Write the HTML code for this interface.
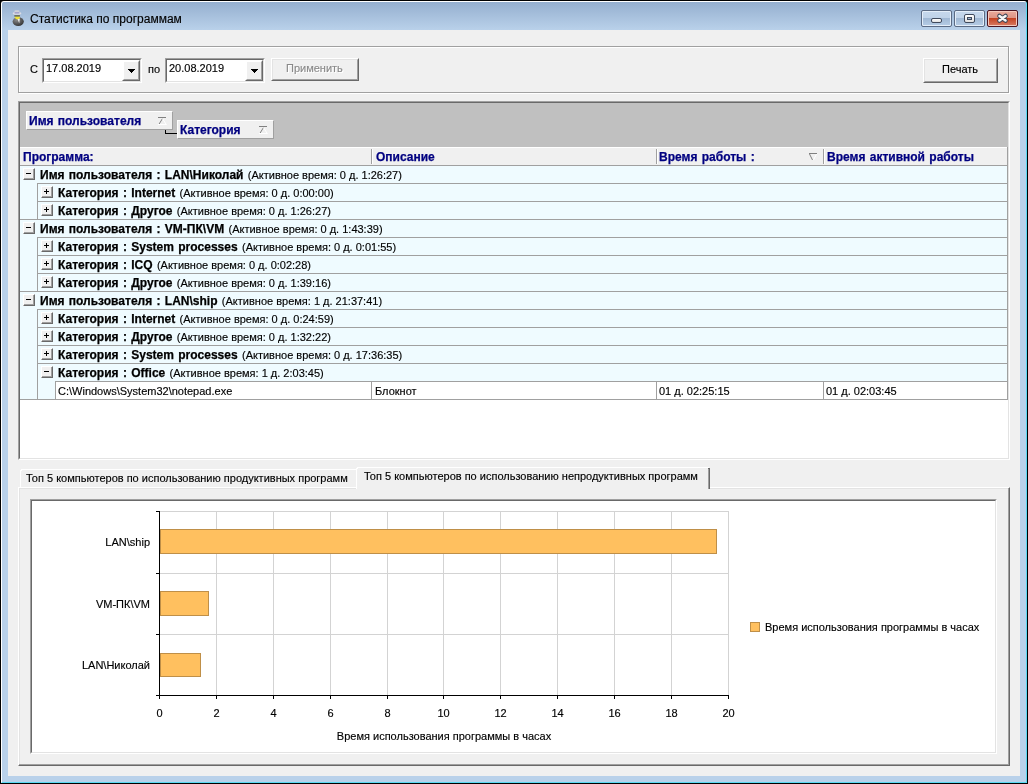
<!DOCTYPE html>
<html><head><meta charset="utf-8">
<style>
*{margin:0;padding:0;box-sizing:border-box}
html,body{width:1028px;height:784px;overflow:hidden;background:#000}
body{position:relative;font-family:"Liberation Sans",sans-serif;font-size:11px;color:#000;-webkit-text-stroke:0.15px}
.a{position:absolute}
.t{position:absolute;white-space:pre;line-height:13px;will-change:transform}
.bd{font-weight:bold;font-size:12px;-webkit-text-stroke:0.25px;word-spacing:1px}
.nm{font-weight:normal;font-size:11px;-webkit-text-stroke:0.15px;word-spacing:0}
.nv{color:#000080}
.sunk{position:absolute;border:1px solid;border-color:#a0a0a0 #fff #fff #a0a0a0}
.sunk>.in{position:absolute;left:0;top:0;right:0;bottom:0;border:1px solid;border-color:#696969 #e3e3e3 #e3e3e3 #696969}
.rais{position:absolute;border:1px solid;border-color:#fff #696969 #696969 #fff;background:#f0f0f0}
.rais>.in{position:absolute;left:0;top:0;right:0;bottom:0;border:1px solid;border-color:#e3e3e3 #a0a0a0 #a0a0a0 #e3e3e3}
.btn{position:absolute;width:12px;height:12px;background:#f0f0f0;border:1px solid;border-color:#fff #696969 #696969 #fff;box-shadow:inset -1px -1px 0 #a0a0a0}
.btn>.h{position:absolute;left:2px;top:4px;width:5px;height:1px;background:#000}
.btn>.v{position:absolute;left:4px;top:2px;width:1px;height:5px;background:#000}
.arr{position:absolute;width:0;height:0;border-left:4px solid transparent;border-right:4px solid transparent;border-top:4px solid #000}
.hdr{position:absolute;background:#f0f0f0;border-bottom:1px solid #a0a0a0}
.ghd{position:absolute;background:#f0f0f0;border:1px solid;border-color:#fff #a0a0a0 #a0a0a0 #fff}
</style></head><body>

<!-- window frame -->
<div class="a" style="left:1px;top:1px;width:1026px;height:782px;background:#b9d1ea;border-top:1px solid #fff;border-left:1px solid #fff;border-right:1px solid #5ad8f2;border-bottom:1px solid #5ad8f2;border-radius:3px 3px 0 0"></div>
<div class="a" style="left:2px;top:2px;width:1024px;height:28px;background:linear-gradient(#95afcf,#b9d1ea);border-radius:2px 2px 0 0"></div>
<div class="a" style="left:8px;top:30px;width:1012px;height:746px;background:#f0f0f0"></div>


<!-- caption buttons -->
<div class="a" style="left:921px;top:10px;width:31px;height:17px;border:1px solid #5b6b84;border-radius:2px;background:linear-gradient(#c6d8ec 0,#c0d3e9 7px,#9fb7d3 7px,#b6cde6 100%);box-shadow:inset 0 0 0 1px #e4eef9"></div>
<div class="a" style="left:954px;top:10px;width:31px;height:17px;border:1px solid #5b6b84;border-radius:2px;background:linear-gradient(#c6d8ec 0,#c0d3e9 7px,#9fb7d3 7px,#b6cde6 100%);box-shadow:inset 0 0 0 1px #e4eef9"></div>
<div class="a" style="left:987px;top:10px;width:31px;height:17px;border:1px solid #4b1420;border-radius:2px;background:linear-gradient(#eaaa9c 0,#de9484 7px,#c3401f 7px,#d77c64 100%);box-shadow:inset 0 0 0 1px #f4c9bd"></div>
<div class="a" style="left:931px;top:18px;width:11px;height:5px;border:1px solid #404a5c;border-radius:2px;background:linear-gradient(#fff,#e0e0e0)"></div>
<div class="a" style="left:964px;top:14px;width:11px;height:9px;border:1px solid #404a5c;border-radius:2px;background:linear-gradient(#fff,#e0e0e0)"></div>
<div class="a" style="left:967px;top:17px;width:5px;height:3px;border:1px solid #404a5c;background:#9fb7d3"></div>
<svg class="a" style="left:995px;top:12px" width="15" height="13" viewBox="0 0 15 13">
<path d="M4.5 4 L10.5 8.5 M10.5 4 L4.5 8.5" stroke="#3d4556" stroke-width="4.6" stroke-linecap="round" fill="none"/>
<path d="M4.5 4 L10.5 8.5 M10.5 4 L4.5 8.5" stroke="#f6f6f6" stroke-width="2.6" stroke-linecap="round" fill="none"/>
</svg>
<!-- icon -->
<svg class="a" style="left:8px;top:6px" width="20" height="22" viewBox="0 0 20 22">
<defs><radialGradient id="bg1" cx="0.35" cy="0.3" r="0.8"><stop offset="0" stop-color="#8a8a8a"/><stop offset="1" stop-color="#2e2e2e"/></radialGradient></defs>
<ellipse cx="10.2" cy="15.6" rx="5.6" ry="4.3" fill="url(#bg1)"/>
<path d="M9.3 12.4 L11.9 12.4 L11.2 17.2 Z" fill="#f0f0f0"/>
<ellipse cx="9.4" cy="11.3" rx="2.5" ry="2.1" fill="#eee23a"/>
<rect x="6.3" y="9" width="5.6" height="1.7" fill="#6b7264"/>
<ellipse cx="9" cy="7.4" rx="4.3" ry="1.3" fill="#dcdce4"/>
<rect x="6.4" y="4.2" width="5" height="3" rx="1.2" fill="#cfd0d8"/>
<rect x="6.6" y="6.4" width="4.8" height="1" fill="#8888c4"/>
</svg>

<!-- title -->
<div class="t" style="left:30px;top:12px;font-size:12px;line-height:15px">Статистика по программам</div>

<!-- top etched box -->
<div class="a" style="left:19px;top:47px;width:991px;height:47px;border:1px solid #fff"></div>
<div class="a" style="left:18px;top:46px;width:991px;height:47px;border:1px solid #a0a0a0"></div>

<div class="t" style="left:30px;top:63px">С</div>
<div class="sunk" style="left:42px;top:58px;width:100px;height:25px"><div class="in" style="background:#fff"></div></div>
<div class="t" style="left:46px;top:62px">17.08.2019</div>
<div class="rais" style="left:122px;top:60px;width:18px;height:21px"><div class="in" style="border-color:#fff #a0a0a0 #a0a0a0 #fff"></div></div>
<svg class="a" style="left:128px;top:69px" width="7" height="4" shape-rendering="crispEdges"><rect x="0" y="0" width="7" height="1"/><rect x="1" y="1" width="5" height="1"/><rect x="2" y="2" width="3" height="1"/><rect x="3" y="3" width="1" height="1"/></svg>

<div class="t" style="left:148px;top:63px">по</div>
<div class="sunk" style="left:165px;top:58px;width:100px;height:25px"><div class="in" style="background:#fff"></div></div>
<div class="t" style="left:169px;top:62px">20.08.2019</div>
<div class="rais" style="left:245px;top:60px;width:18px;height:21px"><div class="in" style="border-color:#fff #a0a0a0 #a0a0a0 #fff"></div></div>
<svg class="a" style="left:251px;top:69px" width="7" height="4" shape-rendering="crispEdges"><rect x="0" y="0" width="7" height="1"/><rect x="1" y="1" width="5" height="1"/><rect x="2" y="2" width="3" height="1"/><rect x="3" y="3" width="1" height="1"/></svg>

<div class="rais" style="left:271px;top:58px;width:88px;height:23px"><div class="in"></div></div>
<div class="t" style="left:287px;top:63px;color:#fff">Применить</div>
<div class="t" style="left:286px;top:62px;color:#8a8a8a">Применить</div>

<div class="rais" style="left:923px;top:58px;width:75px;height:25px"><div class="in"></div></div>
<div class="t" style="left:942px;top:63px">Печать</div>

<!-- grid -->
<div class="sunk" style="left:18px;top:101px;width:992px;height:359px"><div class="in" style="background:#fff"></div></div>
<div class="a" style="left:20px;top:103px;width:988px;height:44px;background:#c0c0c0"></div>
<div class="ghd" style="left:26px;top:111px;width:147px;height:19px"></div>
<div class="t bd nv" style="left:29px;top:115px">Имя пользователя</div>
<div class="a" style="left:165px;top:130px;width:1px;height:4px;background:#000"></div>
<div class="a" style="left:165px;top:133px;width:12px;height:1px;background:#000"></div>
<div class="ghd" style="left:177px;top:120px;width:97px;height:19px"></div>
<div class="t bd nv" style="left:180px;top:124px">Категория</div>




<!-- column headers -->
<div class="a" style="left:20px;top:147px;width:988px;height:19px;background:#f0f0f0;border-top:1px solid #fff;border-bottom:1px solid #a0a0a0"></div>
<div class="a" style="left:371px;top:149px;width:1px;height:15px;background:#a0a0a0"></div>
<div class="a" style="left:372px;top:149px;width:1px;height:15px;background:#fff"></div>
<div class="a" style="left:656px;top:149px;width:1px;height:15px;background:#a0a0a0"></div>
<div class="a" style="left:657px;top:149px;width:1px;height:15px;background:#fff"></div>
<div class="a" style="left:823px;top:149px;width:1px;height:15px;background:#a0a0a0"></div>
<div class="a" style="left:824px;top:149px;width:1px;height:15px;background:#fff"></div>
<div class="a" style="left:1007px;top:147px;width:1px;height:19px;background:#a0a0a0"></div>
<div class="t bd nv" style="left:23px;top:151px">Программа:</div>
<div class="t bd nv" style="left:376px;top:151px">Описание</div>
<div class="t bd nv" style="left:659px;top:151px">Время работы :</div>
<div class="t bd nv" style="left:827px;top:151px">Время активной работы</div>
<svg class="a" style="left:0;top:0" width="1028" height="200">
<path d="M158 117.5 H166" stroke="#808080" stroke-width="1"/>
<path d="M158.5 125 L162.5 118.5" stroke="#808080" stroke-width="1"/>
<path d="M162.5 118.5 L166.5 125 M158 124.5 H166" stroke="#fff" stroke-width="1"/>
<path d="M259 126.5 H267" stroke="#808080" stroke-width="1"/>
<path d="M259.5 134 L263.5 127.5" stroke="#808080" stroke-width="1"/>
<path d="M263.5 127.5 L267.5 134 M259 133.5 H267" stroke="#fff" stroke-width="1"/>
<path d="M809 153.5 H817" stroke="#808080" stroke-width="1"/>
<path d="M809.5 154 L812.5 160" stroke="#808080" stroke-width="1"/>
<path d="M816.5 154 L813.5 160" stroke="#fff" stroke-width="1"/>
</svg>

<div class="a" style="left:20px;top:166px;width:988px;height:234px;background:#effbff"></div>
<div class="a" style="left:37px;top:183px;width:971px;height:1px;background:#a0a0a0"></div>
<div class="btn" style="left:23px;top:168px"><i class="h"></i></div>
<div class="t bd" style="left:40px;top:166px;line-height:18px">Имя пользователя : LAN\Николай <span class="nm">(Активное время: 0 д. 1:26:27)</span></div>
<div class="a" style="left:37px;top:201px;width:971px;height:1px;background:#a0a0a0"></div>
<div class="a" style="left:37px;top:184px;width:1px;height:18px;background:#a0a0a0"></div>
<div class="btn" style="left:41px;top:186px"><i class="h"></i><i class="v"></i></div>
<div class="t bd" style="left:58px;top:184px;line-height:18px">Категория : Internet <span class="nm">(Активное время: 0 д. 0:00:00)</span></div>
<div class="a" style="left:20px;top:219px;width:988px;height:1px;background:#a0a0a0"></div>
<div class="a" style="left:37px;top:202px;width:1px;height:18px;background:#a0a0a0"></div>
<div class="btn" style="left:41px;top:204px"><i class="h"></i><i class="v"></i></div>
<div class="t bd" style="left:58px;top:202px;line-height:18px">Категория : Другое <span class="nm">(Активное время: 0 д. 1:26:27)</span></div>
<div class="a" style="left:37px;top:237px;width:971px;height:1px;background:#a0a0a0"></div>
<div class="btn" style="left:23px;top:222px"><i class="h"></i></div>
<div class="t bd" style="left:40px;top:220px;line-height:18px">Имя пользователя : VM-ПК\VM <span class="nm">(Активное время: 0 д. 1:43:39)</span></div>
<div class="a" style="left:37px;top:255px;width:971px;height:1px;background:#a0a0a0"></div>
<div class="a" style="left:37px;top:238px;width:1px;height:18px;background:#a0a0a0"></div>
<div class="btn" style="left:41px;top:240px"><i class="h"></i><i class="v"></i></div>
<div class="t bd" style="left:58px;top:238px;line-height:18px">Категория : System processes <span class="nm">(Активное время: 0 д. 0:01:55)</span></div>
<div class="a" style="left:37px;top:273px;width:971px;height:1px;background:#a0a0a0"></div>
<div class="a" style="left:37px;top:256px;width:1px;height:18px;background:#a0a0a0"></div>
<div class="btn" style="left:41px;top:258px"><i class="h"></i><i class="v"></i></div>
<div class="t bd" style="left:58px;top:256px;line-height:18px">Категория : ICQ <span class="nm">(Активное время: 0 д. 0:02:28)</span></div>
<div class="a" style="left:20px;top:291px;width:988px;height:1px;background:#a0a0a0"></div>
<div class="a" style="left:37px;top:274px;width:1px;height:18px;background:#a0a0a0"></div>
<div class="btn" style="left:41px;top:276px"><i class="h"></i><i class="v"></i></div>
<div class="t bd" style="left:58px;top:274px;line-height:18px">Категория : Другое <span class="nm">(Активное время: 0 д. 1:39:16)</span></div>
<div class="a" style="left:37px;top:309px;width:971px;height:1px;background:#a0a0a0"></div>
<div class="btn" style="left:23px;top:294px"><i class="h"></i></div>
<div class="t bd" style="left:40px;top:292px;line-height:18px">Имя пользователя : LAN\ship <span class="nm">(Активное время: 1 д. 21:37:41)</span></div>
<div class="a" style="left:37px;top:327px;width:971px;height:1px;background:#a0a0a0"></div>
<div class="a" style="left:37px;top:310px;width:1px;height:18px;background:#a0a0a0"></div>
<div class="btn" style="left:41px;top:312px"><i class="h"></i><i class="v"></i></div>
<div class="t bd" style="left:58px;top:310px;line-height:18px">Категория : Internet <span class="nm">(Активное время: 0 д. 0:24:59)</span></div>
<div class="a" style="left:37px;top:345px;width:971px;height:1px;background:#a0a0a0"></div>
<div class="a" style="left:37px;top:328px;width:1px;height:18px;background:#a0a0a0"></div>
<div class="btn" style="left:41px;top:330px"><i class="h"></i><i class="v"></i></div>
<div class="t bd" style="left:58px;top:328px;line-height:18px">Категория : Другое <span class="nm">(Активное время: 0 д. 1:32:22)</span></div>
<div class="a" style="left:37px;top:363px;width:971px;height:1px;background:#a0a0a0"></div>
<div class="a" style="left:37px;top:346px;width:1px;height:18px;background:#a0a0a0"></div>
<div class="btn" style="left:41px;top:348px"><i class="h"></i><i class="v"></i></div>
<div class="t bd" style="left:58px;top:346px;line-height:18px">Категория : System processes <span class="nm">(Активное время: 0 д. 17:36:35)</span></div>
<div class="a" style="left:55px;top:381px;width:953px;height:1px;background:#a0a0a0"></div>
<div class="a" style="left:37px;top:364px;width:1px;height:18px;background:#a0a0a0"></div>
<div class="btn" style="left:41px;top:366px"><i class="h"></i></div>
<div class="t bd" style="left:58px;top:364px;line-height:18px">Категория : Office <span class="nm">(Активное время: 1 д. 2:03:45)</span></div>
<div class="a" style="left:37px;top:382px;width:1px;height:18px;background:#a0a0a0"></div>
<div class="a" style="left:55px;top:382px;width:953px;height:17px;background:#fff;border-left:1px solid #a0a0a0"></div>
<div class="a" style="left:20px;top:399px;width:988px;height:1px;background:#a0a0a0"></div>
<div class="a" style="left:371px;top:382px;width:1px;height:17px;background:#a0a0a0"></div>
<div class="a" style="left:656px;top:382px;width:1px;height:17px;background:#a0a0a0"></div>
<div class="a" style="left:823px;top:382px;width:1px;height:17px;background:#a0a0a0"></div>
<div class="t" style="left:58px;top:382px;line-height:18px">C:\Windows\System32\notepad.exe</div>
<div class="t" style="left:375px;top:382px;line-height:18px">Блокнот</div>
<div class="t" style="left:659px;top:382px;line-height:18px">01 д. 02:25:15</div>
<div class="t" style="left:826px;top:382px;line-height:18px">01 д. 02:03:45</div>
<div class="a" style="left:1007px;top:166px;width:1px;height:234px;background:#a0a0a0"></div>
<!-- tabs -->
<div class="a" style="left:18px;top:487px;width:992px;height:279px;border:1px solid;border-color:#fff #696969 #696969 #fff;background:#f0f0f0;box-shadow:inset -1px -1px 0 #a0a0a0, inset 1px 1px 0 #e3e3e3"></div>
<div class="a" style="left:20px;top:469px;width:337px;height:18px;border-top:1px solid #fff;border-left:1px solid #fff;background:#f0f0f0"></div>
<div class="a" style="left:20px;top:469px;width:1px;height:1px;background:#f0f0f0"></div>
<div class="a" style="left:21px;top:470px;width:1px;height:1px;background:#fff"></div>
<div class="t" style="left:26px;top:472px">Топ 5 компьютеров по использованию продуктивных программ</div>
<div class="a" style="left:356px;top:467px;width:354px;height:22px;border-top:1px solid #fff;border-left:1px solid #fff;border-right:1px solid #696969;background:#f0f0f0;box-shadow:inset -1px 0 0 #a0a0a0"></div>
<div class="a" style="left:356px;top:467px;width:1px;height:1px;background:#f0f0f0"></div>
<div class="a" style="left:357px;top:468px;width:1px;height:1px;background:#fff"></div>
<div class="a" style="left:709px;top:467px;width:1px;height:1px;background:#f0f0f0"></div>
<div class="a" style="left:708px;top:468px;width:1px;height:1px;background:#696969"></div>
<div class="t" style="left:364px;top:470px">Топ 5 компьютеров по использованию непродуктивных программ</div>
<div class="sunk" style="left:30px;top:499px;width:967px;height:255px"><div class="in" style="background:#fff"></div></div>
<svg class="a" style="left:0;top:0" width="1028" height="784" shape-rendering="crispEdges">
<rect x="160" y="511" width="569" height="1" fill="#d3d3d3"/>
<rect x="160" y="573" width="569" height="1" fill="#d3d3d3"/>
<rect x="160" y="634" width="569" height="1" fill="#d3d3d3"/>
<rect x="216" y="511" width="1" height="184" fill="#d3d3d3"/>
<rect x="273" y="511" width="1" height="184" fill="#d3d3d3"/>
<rect x="330" y="511" width="1" height="184" fill="#d3d3d3"/>
<rect x="387" y="511" width="1" height="184" fill="#d3d3d3"/>
<rect x="443" y="511" width="1" height="184" fill="#d3d3d3"/>
<rect x="500" y="511" width="1" height="184" fill="#d3d3d3"/>
<rect x="557" y="511" width="1" height="184" fill="#d3d3d3"/>
<rect x="614" y="511" width="1" height="184" fill="#d3d3d3"/>
<rect x="671" y="511" width="1" height="184" fill="#d3d3d3"/>
<rect x="728" y="511" width="1" height="184" fill="#d3d3d3"/>
<rect x="160" y="529" width="557" height="25" fill="#ffc05f"/>
<rect x="160.5" y="529.5" width="556" height="24" fill="none" stroke="#bf8f48" stroke-width="1"/>
<rect x="160" y="591" width="49" height="25" fill="#ffc05f"/>
<rect x="160.5" y="591.5" width="48" height="24" fill="none" stroke="#bf8f48" stroke-width="1"/>
<rect x="160" y="653" width="41" height="24" fill="#ffc05f"/>
<rect x="160.5" y="653.5" width="40" height="23" fill="none" stroke="#bf8f48" stroke-width="1"/>
<rect x="159" y="511" width="1" height="185" fill="#000"/>
<rect x="156" y="695" width="573" height="1" fill="#000"/>
<rect x="156" y="511" width="3" height="1" fill="#000"/>
<rect x="156" y="573" width="3" height="1" fill="#000"/>
<rect x="156" y="634" width="3" height="1" fill="#000"/>
<rect x="159" y="696" width="1" height="3" fill="#000"/>
<rect x="216" y="696" width="1" height="3" fill="#000"/>
<rect x="273" y="696" width="1" height="3" fill="#000"/>
<rect x="330" y="696" width="1" height="3" fill="#000"/>
<rect x="387" y="696" width="1" height="3" fill="#000"/>
<rect x="443" y="696" width="1" height="3" fill="#000"/>
<rect x="500" y="696" width="1" height="3" fill="#000"/>
<rect x="557" y="696" width="1" height="3" fill="#000"/>
<rect x="614" y="696" width="1" height="3" fill="#000"/>
<rect x="671" y="696" width="1" height="3" fill="#000"/>
<rect x="728" y="696" width="1" height="3" fill="#000"/>
<rect x="750" y="622" width="10" height="10" fill="#ffc05f"/>
<rect x="750.5" y="622.5" width="9" height="9" fill="none" stroke="#bf8f48"/>
</svg>
<div class="t" style="left:139px;top:707px;width:41px;text-align:center">0</div>
<div class="t" style="left:196px;top:707px;width:41px;text-align:center">2</div>
<div class="t" style="left:253px;top:707px;width:41px;text-align:center">4</div>
<div class="t" style="left:310px;top:707px;width:41px;text-align:center">6</div>
<div class="t" style="left:367px;top:707px;width:41px;text-align:center">8</div>
<div class="t" style="left:423px;top:707px;width:41px;text-align:center">10</div>
<div class="t" style="left:480px;top:707px;width:41px;text-align:center">12</div>
<div class="t" style="left:537px;top:707px;width:41px;text-align:center">14</div>
<div class="t" style="left:594px;top:707px;width:41px;text-align:center">16</div>
<div class="t" style="left:651px;top:707px;width:41px;text-align:center">18</div>
<div class="t" style="left:708px;top:707px;width:41px;text-align:center">20</div>
<div class="t" style="left:50px;top:536px;width:100px;text-align:right">LAN\ship</div>
<div class="t" style="left:50px;top:598px;width:100px;text-align:right">VM-ПК\VM</div>
<div class="t" style="left:50px;top:659px;width:100px;text-align:right">LAN\Николай</div>
<div class="t" style="left:294px;top:730px;width:300px;text-align:center">Время использования программы в часах</div>
<div class="t" style="left:765px;top:621px">Время использования программы в часах</div>
</body></html>
